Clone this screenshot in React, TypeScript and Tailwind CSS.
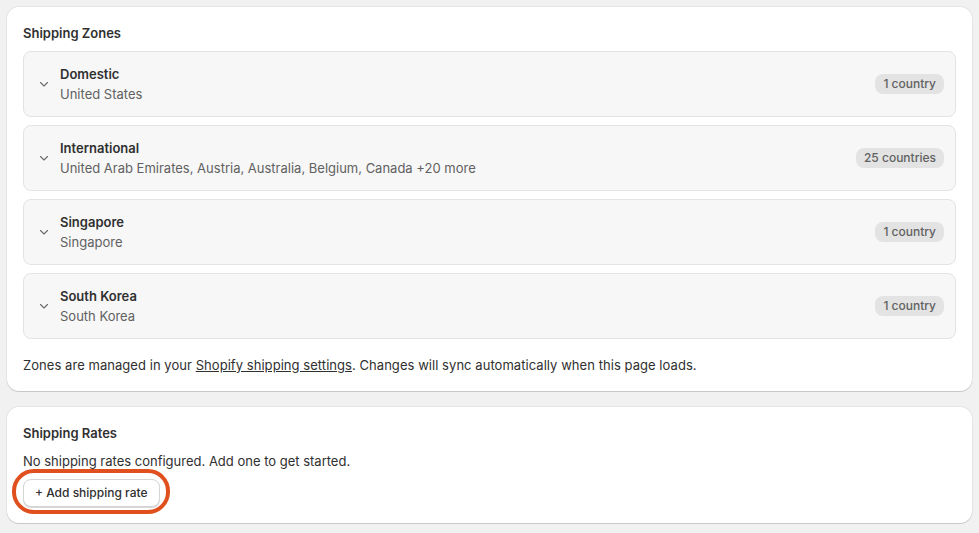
import React from "react";

const zones = [
  { name: "Domestic", sub: "United States", badge: "1 country" },
  { name: "International", sub: "United Arab Emirates, Austria, Australia, Belgium, Canada +20 more", badge: "25 countries" },
  { name: "Singapore", sub: "Singapore", badge: "1 country" },
  { name: "South Korea", sub: "South Korea", badge: "1 country" },
];

function Chevron() {
  return (
    <svg width="16" height="16" viewBox="0 0 16 16" fill="none" className="shrink-0">
      <path d="M4.5 6.5 8 10l3.5-3.5" stroke="#6b6b6b" strokeWidth="1.1" strokeLinecap="round" strokeLinejoin="round" />
    </svg>
  );
}

export default function App() {
  return (
    <div
      className="min-h-[533px] bg-[#f1f1f1] px-[7px] pt-[7px] pb-[10px] flex flex-col gap-4 text-[13px] leading-5 text-[#303030]"
      style={{ fontFamily: "Inter, 'Noto Sans', sans-serif" }}
    >
      <div className="bg-white rounded-xl shadow-[0_1px_0_0_rgba(0,0,0,0.12),0_0_0_1px_rgba(0,0,0,0.05)] p-4 flex flex-col">
        <h2 className="font-semibold">Shipping Zones</h2>
        <div className="mt-2 flex flex-col gap-2">
          {zones.map((z) => (
            <div
              key={z.name}
              className="bg-[#f7f7f7] border border-[#e3e3e3] rounded-lg py-3 pl-3 pr-[11px] flex items-center gap-2"
            >
              <Chevron />
              <div className="flex-1 min-w-0">
                <div className="font-semibold">{z.name}</div>
                <div className="text-[#616161]">{z.sub}</div>
              </div>
              <span className="bg-[#e3e3e3] text-[#616161] text-[12px] font-medium leading-5 px-2 rounded-lg">
                {z.badge}
              </span>
            </div>
          ))}
        </div>
        <p className="mt-4 tracking-[0.05px]">
          Zones are managed in your <span className="underline">Shopify shipping settings</span>. Changes will sync automatically when this page loads.
        </p>
      </div>

      <div className="bg-white rounded-xl shadow-[0_1px_0_0_rgba(0,0,0,0.12),0_0_0_1px_rgba(0,0,0,0.05)] p-4 flex flex-col gap-2 items-start">
        <h2 className="font-semibold">Shipping Rates</h2>
        <p>No shipping rates configured. Add one to get started.</p>
        <div className="relative">
          <button className="h-7 px-[11px] bg-white border border-[#d4d4d4] rounded-lg text-[12px] font-medium text-[#303030] shadow-[0_1px_0_0_rgba(0,0,0,0.15)]">
            + Add shipping rate
          </button>
          <div className="absolute left-[-11px] right-[-10px] top-[-10px] bottom-[-7px] border-4 border-[#e0501f] rounded-[22px] pointer-events-none" />
        </div>
      </div>
    </div>
  );
}
